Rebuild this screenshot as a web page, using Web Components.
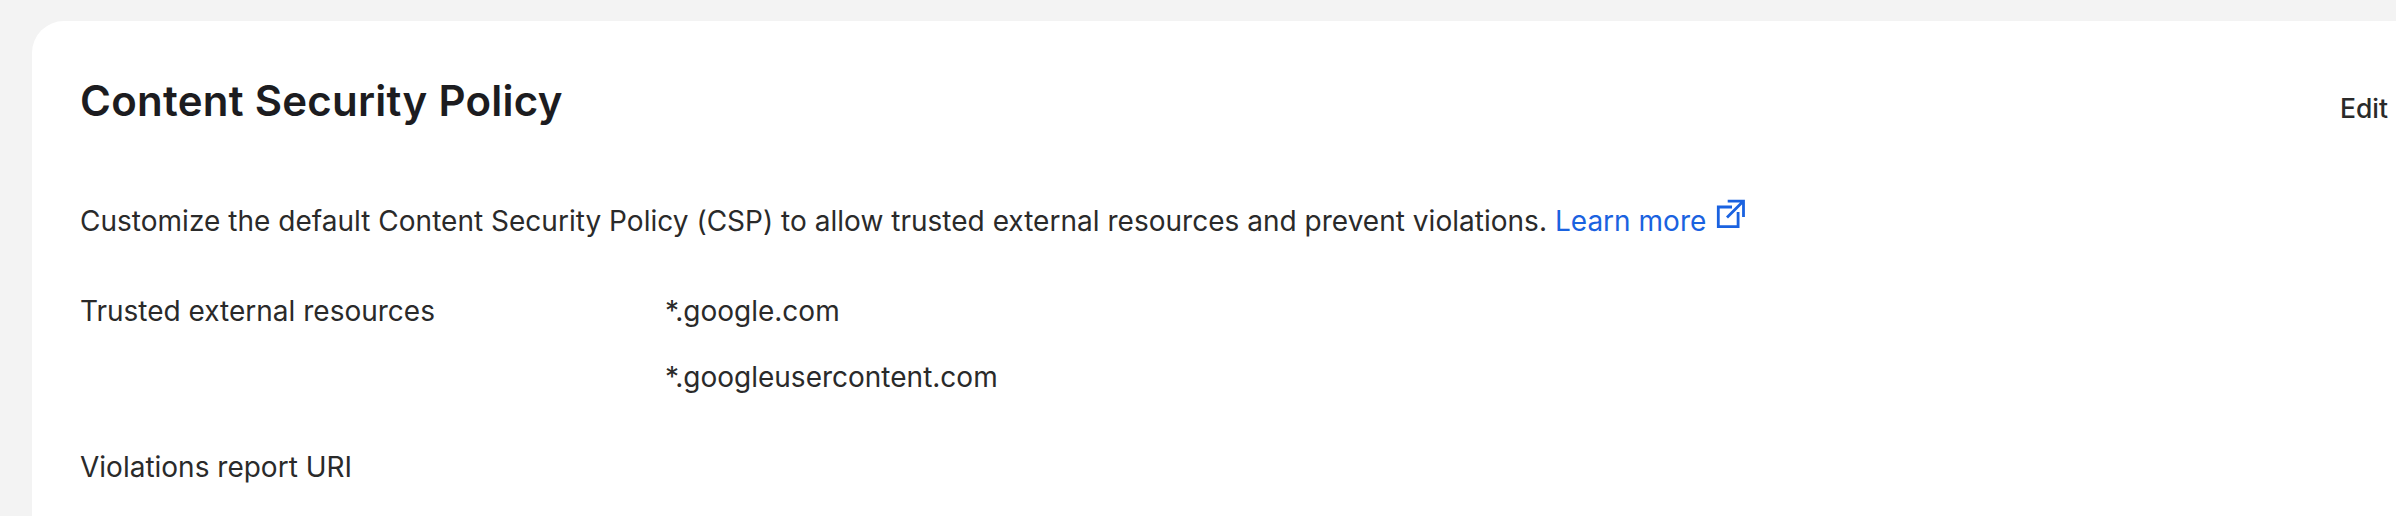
<!DOCTYPE html>
<html lang="en"><head><meta charset="utf-8"><title>Content Security Policy</title>
<style>html,body{margin:0;height:100%;overflow:hidden;background:#f3f3f3}body{font-family:Inter,sans-serif;color:#2a2a2a;display:flow-root}</style></head><body>
<policy-card>
<span slot="title">Content Security Policy</span><span slot="action">Edit</span>
<policy-intro>Customize the default Content Security Policy (CSP) to allow trusted external resources and prevent violations. <external-link slot="link">Learn more</external-link></policy-intro>
<policy-row><span slot="label">Trusted external resources</span><span>*.google.com</span><span>*.googleusercontent.com</span></policy-row>
<policy-row><span slot="label">Violations report URI</span></policy-row>
</policy-card>
<script>
const define=(name,html)=>customElements.define(name,class extends HTMLElement{constructor(){super();this.attachShadow({mode:'open'}).innerHTML=html}});
define('policy-card',`<style>:host{display:block;box-sizing:border-box;margin:21px 0 0 32px;padding:48px 8px 0 48px;height:495px;background:#fff;border-radius:32px 0 0 0;white-space:nowrap}
header{display:flex;justify-content:space-between;height:130px}
h1{margin:0;font-size:42px;line-height:64px;font-weight:600;letter-spacing:.26px;color:#1c1c20}
.edit{font-size:26.5px;line-height:78px;font-weight:500}</style><header><h1><slot name="title"></slot></h1><div class="edit"><slot name="action"></slot></div></header><slot></slot>`);
define('policy-intro',`<style>:host{display:flex;height:90px;font-size:28px;line-height:44px;letter-spacing:.02px}p{margin:0}</style><p><slot></slot><slot name="link"></slot></p>`);
define('external-link',`<style>:host{display:inline;color:#1a62e0}a{color:inherit}svg{margin-left:10px;vertical-align:2px}</style><a><slot></slot><svg width="30" height="30" viewBox="0 0 30 30" fill="none" stroke="currentColor" stroke-width="2.8"><path d="M16 8H2.3v19.7h19.8V13M11.7 2.1h15.8v16M27.5 2.1 11 18.6"/></svg></a>`);
define('policy-row',`<style>:host{display:grid;grid-template-columns:585px 1fr;margin-bottom:46px;font-size:28px;line-height:44px}.values{display:flex;flex-direction:column;gap:22px}</style><div><slot name="label"></slot></div><div class="values"><slot></slot></div>`);
</script></body></html>
